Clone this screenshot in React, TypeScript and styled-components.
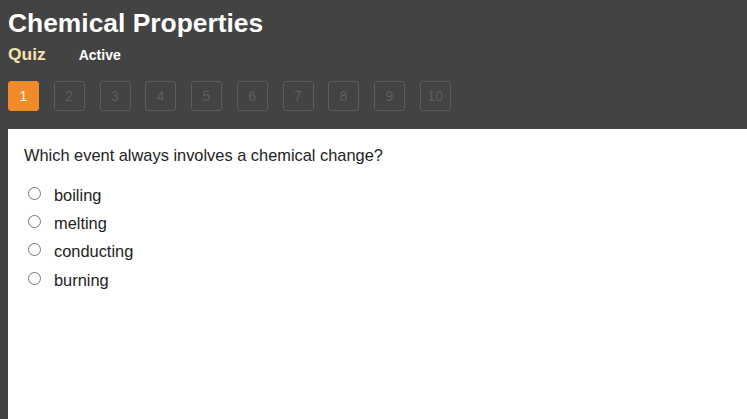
import styled, { createGlobalStyle } from 'styled-components';

const GlobalStyle = createGlobalStyle`
  html, body {
    margin: 0;
    padding: 0;
    background: #434343;
    font-family: "Liberation Sans", Arial, sans-serif;
  }
`;

const Page = styled.div`
  display: flex;
  flex-direction: column;
  min-height: 419px;
  padding-left: 8px;
  box-sizing: border-box;
`;

const Title = styled.h1`
  margin: 0;
  padding-top: 7px;
  font-size: 26.4px;
  line-height: 32px;
  font-weight: bold;
  color: #ffffff;
`;

const SubRow = styled.div`
  display: flex;
  align-items: baseline;
  gap: 33px;
  margin-top: 5px;
  height: 28px;
`;

const QuizLabel = styled.span`
  font-size: 17.4px;
  font-weight: bold;
  color: #f6e2ae;
`;

const Status = styled.span`
  font-size: 14px;
  font-weight: bold;
  color: #ffffff;
`;

const Pager = styled.div`
  display: flex;
  gap: 14.75px;
  margin-top: 9px;
`;

const PageButton = styled.div<{ $active?: boolean }>`
  width: 31px;
  height: 30px;
  box-sizing: border-box;
  display: flex;
  align-items: center;
  justify-content: center;
  border-radius: 3px;
  font-size: 14px;
  background: ${(p) => (p.$active ? '#f18b2a' : 'transparent')};
  border: 1px solid ${(p) => (p.$active ? '#f18b2a' : '#5c5c5c')};
  color: ${(p) => (p.$active ? '#ffffff' : '#5e5e5e')};
`;

const Panel = styled.div`
  flex: 1;
  margin-top: 18px;
  background: #ffffff;
  padding: 16px 16px;
`;

const Question = styled.p`
  margin: 0 0 16px;
  font-size: 16.4px;
  line-height: 20px;
  color: #222222;
`;

const Options = styled.div`
  display: flex;
  flex-direction: column;
`;

const Option = styled.label`
  display: flex;
  align-items: center;
  height: 28.33px;
  font-size: 16.4px;
  color: #222222;
`;

const Radio = styled.span`
  width: 11px;
  height: 11px;
  border: 1px solid #777777;
  border-radius: 50%;
  margin: -4px 13px 0 4px;
  background: #ffffff;
`;

const options = ['boiling', 'melting', 'conducting', 'burning'];

export default function App() {
  return (
    <>
      <GlobalStyle />
      <Page>
        <Title>Chemical Properties</Title>
        <SubRow>
          <QuizLabel>Quiz</QuizLabel>
          <Status>Active</Status>
        </SubRow>
        <Pager>
          {Array.from({ length: 10 }, (_, i) => (
            <PageButton key={i} $active={i === 0}>
              {i + 1}
            </PageButton>
          ))}
        </Pager>
        <Panel>
          <Question>Which event always involves a chemical change?</Question>
          <Options>
            {options.map((o) => (
              <Option key={o}>
                <Radio />
                {o}
              </Option>
            ))}
          </Options>
        </Panel>
      </Page>
    </>
  );
}
